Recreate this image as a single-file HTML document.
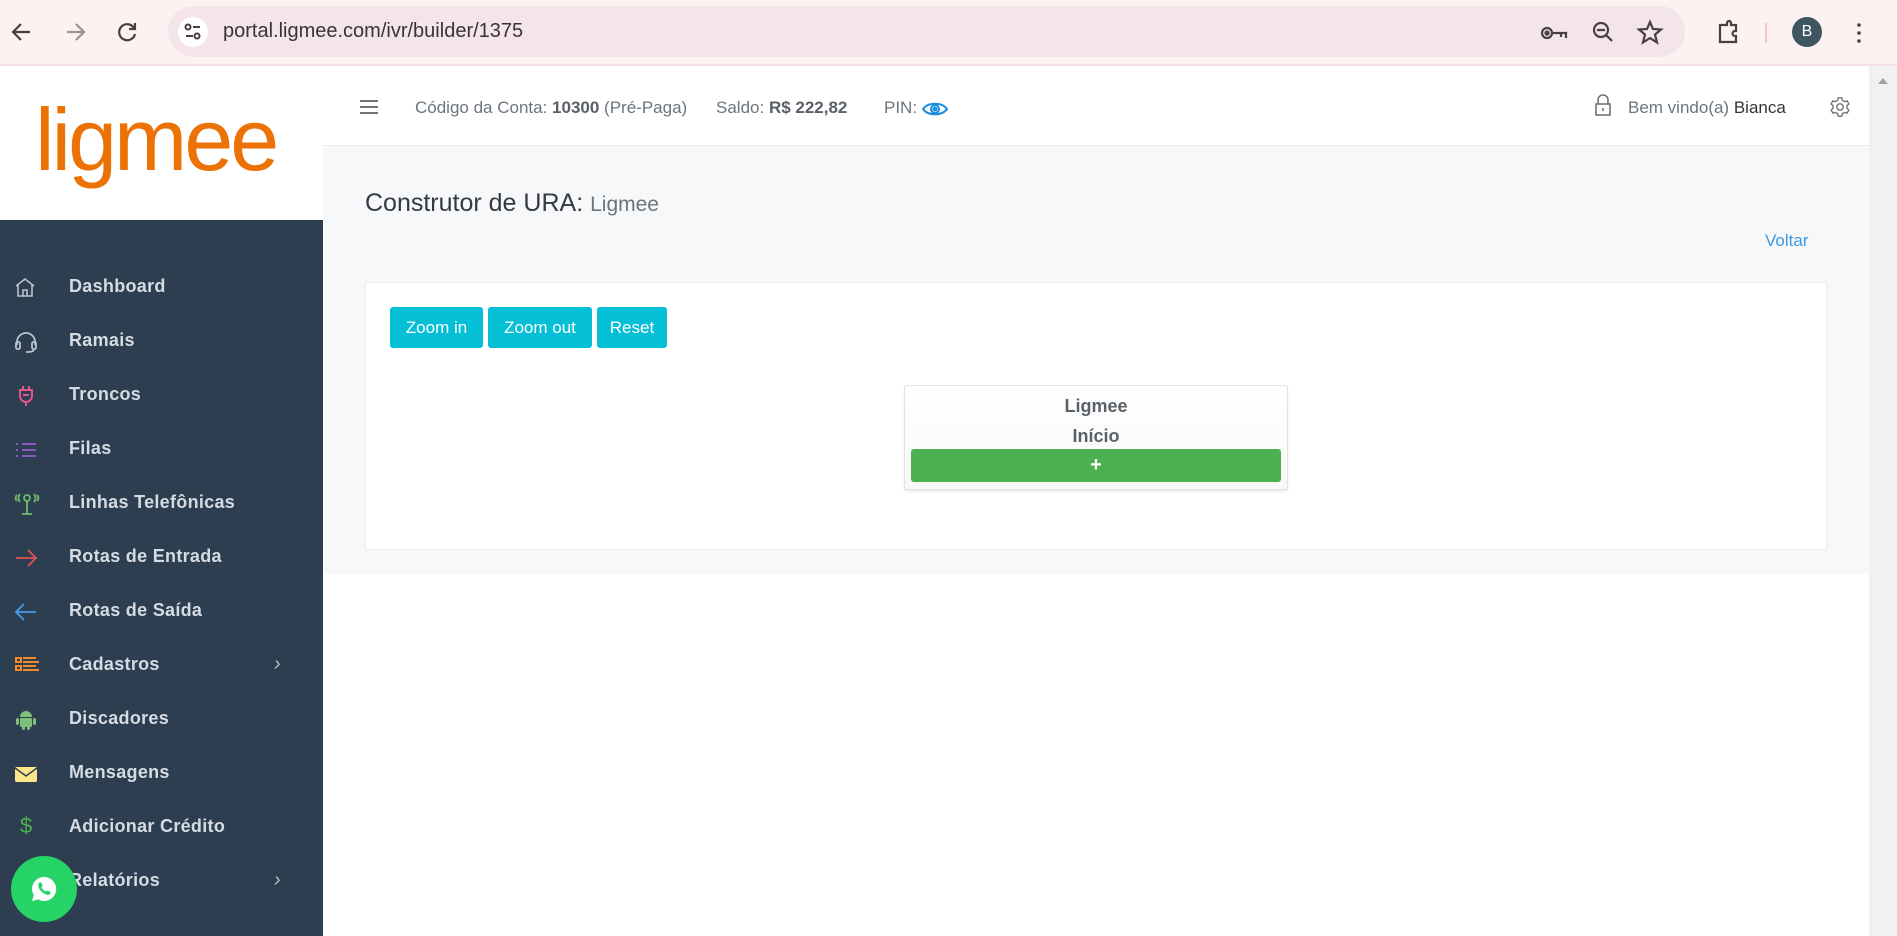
<!DOCTYPE html>
<html><head><meta charset="utf-8"><style>
*{box-sizing:border-box;margin:0;padding:0}
body{width:1897px;height:936px;overflow:hidden;font-family:"Liberation Sans",sans-serif;background:#fff;position:relative}
.a{position:absolute}
#chrome{left:0;top:0;width:1897px;height:66px;background:#fdf2f2;border-bottom:2px solid #f4dfe2}
#pill{left:168px;top:6px;width:1517px;height:51px;border-radius:26px;background:#f3e5e9}
#side{left:0;top:66px;width:323px;height:870px;background:#2d3e50}
#logo{left:0;top:66px;width:323px;height:154px;background:#fff}
#hdr{left:323px;top:66px;width:1546px;height:80px;background:#fff;border-bottom:1px solid #e8eaed}
#content{left:323px;top:146px;width:1546px;height:428px;background:#f7f8fa}
#scroll{left:1869px;top:66px;width:28px;height:870px;background:#f1f1f1}
.hd{font-size:17px;color:#6c757d;top:97px}
.hd b{color:#5a6066}
.item{left:0;width:323px;height:54px;color:#d5dbe2;font-size:18px;font-weight:bold;letter-spacing:.3px}
.item span{position:absolute;left:69px;top:15px}
.item svg{position:absolute;left:14px;top:15px}
.chev{position:absolute;left:274px;top:14px;color:#c0c6cc;font-weight:normal;font-size:20px}
.btn{top:307px;height:41px;background:#05bfd7;color:#fff;font-size:17px;border-radius:3px;text-align:center;line-height:41px}
</style></head><body>
<div id="chrome" class="a"></div>
<div id="pill" class="a"></div>
<svg class="a" style="left:8px;top:19px" width="140" height="26" viewBox="0 0 140 26" fill="none" stroke="#4a3f42" stroke-width="2.2">
<path d="M22 13H6M13 5l-8 8 8 8"/>
<path d="M59 13h16M68 5l8 8-8 8" stroke="#9a9193"/>
<path d="M126 9a8 8 0 1 0 1 6M127 4v6h-6"/>
</svg>
<div class="a" style="left:178px;top:17px;width:30px;height:30px;border-radius:15px;background:#fff"></div>
<svg class="a" style="left:184px;top:22px" width="18" height="20" viewBox="0 0 18 20" fill="none" stroke="#4a3f42" stroke-width="2"><circle cx="4" cy="5" r="2.5"/><path d="M9 5h7M2 14h7"/><circle cx="13" cy="14" r="2.5"/></svg>
<div class="a" style="left:223px;top:20px;font-size:20px;color:#3c3336">portal.ligmee.com/ivr/builder/1375</div>
<svg class="a" style="left:1538px;top:18px" width="340" height="30" viewBox="0 0 340 30" fill="none" stroke="#4a3f42" stroke-width="2.2">
<circle cx="9" cy="15" r="5"/><circle cx="9" cy="15" r="1.5" fill="#4a3f42"/><path d="M14 15h14v5M23 15v4"/>
<circle cx="63" cy="12" r="7"/><path d="M59 12h8M68 17l6 6"/>
<path d="M112 4l3 7 8 .5-6 5 2 8-7-4.5-7 4.5 2-8-6-5 8-.5z"/>
<path d="M182 7h7v-2a2 2 0 0 1 4 0v2h5v6h-1a2.5 2.5 0 0 0 0 5h1v6h-16z"/>
<path d="M228 5v20" stroke="#f4c9d0"/>
<circle cx="321" cy="7" r="1.8" fill="#4a3f42" stroke="none"/><circle cx="321" cy="15" r="1.8" fill="#4a3f42" stroke="none"/><circle cx="321" cy="23" r="1.8" fill="#4a3f42" stroke="none"/>
</svg>
<div class="a" style="left:1792px;top:17px;width:30px;height:30px;border-radius:15px;background:#3f5661;color:#fff;font-size:16px;text-align:center;line-height:30px">B</div>

<div id="side" class="a"></div>
<div id="logo" class="a"><div class="a" style="left:35px;top:30px;font-size:88px;color:#ec7205;font-family:'Liberation Sans',sans-serif;letter-spacing:-3px;line-height:1">ligmee</div></div>
<div id="hdr" class="a"></div>
<div id="content" class="a"></div>
<div id="scroll" class="a"><div class="a" style="left:9px;top:12px;border:5px solid transparent;border-bottom:6px solid #a0a0a0;border-top:0"></div></div>

<svg class="a" style="left:359px;top:99px" width="20" height="16"><path d="M1 2h18M1 8h18M1 14h18" stroke="#6c757d" stroke-width="2"/></svg>
<div class="a hd" style="left:415px;top:98px">Código da Conta: <b>10300</b> (Pré-Paga)</div>
<div class="a hd" style="left:716px;top:98px">Saldo: <b>R$ 222,82</b></div>
<div class="a hd" style="left:884px;top:98px">PIN:</div>
<svg class="a" style="left:921px;top:99px" width="28" height="20" viewBox="0 0 28 20" fill="none" stroke="#1d8fe1" stroke-width="2"><path d="M2 10C7 3 21 3 26 10C21 17 7 17 2 10z"/><circle cx="14" cy="10" r="4"/><circle cx="14" cy="10" r="1.5" fill="#1d8fe1"/></svg>
<svg class="a" style="left:1594px;top:94px" width="18" height="22" viewBox="0 0 18 22" fill="none" stroke="#6c757d" stroke-width="1.6"><path d="M4 10V6a5 5 0 0 1 10 0v4"/><rect x="2" y="10" width="14" height="11"/><path d="M9 14v3"/></svg>
<div class="a hd" style="left:1628px;top:98px">Bem vindo(a) <span style="color:#333">Bianca</span></div>
<svg class="a" style="left:1829px;top:96px" width="22" height="22" viewBox="0 0 24 24" fill="none" stroke="#6c757d" stroke-width="1.5"><circle cx="12" cy="12" r="3.5"/><path d="M10 2h4l.6 2.8 2.4 1.4 2.7-.9 2 3.4-2.1 1.9v2.8l2.1 1.9-2 3.4-2.7-.9-2.4 1.4L14 22h-4l-.6-2.8-2.4-1.4-2.7.9-2-3.4 2.1-1.9v-2.8L2.3 8.7l2-3.4 2.7.9 2.4-1.4z"/></svg>

<div class="a" style="left:365px;top:189px;font-size:25px;color:#343a40">Construtor de URA: <span style="color:#6c757d;font-size:21px">Ligmee</span></div>
<div class="a" style="left:1765px;top:231px;font-size:17px;color:#3c9be6">Voltar</div>

<div class="a" style="left:365px;top:282px;width:1462px;height:268px;background:#fff;border:1px solid #e9ecef"></div>
<div class="a btn" style="left:390px;width:93px">Zoom in</div>
<div class="a btn" style="left:488px;width:104px">Zoom out</div>
<div class="a btn" style="left:597px;width:70px">Reset</div>
<div class="a" style="left:904px;top:385px;width:384px;height:105px;border:1px solid #e2e2e2;border-radius:3px;background:linear-gradient(#fff,#f8f8f8);box-shadow:0 2px 2px rgba(0,0,0,.08)"></div>
<div class="a" style="left:904px;top:396px;width:384px;text-align:center;font-size:18px;font-weight:bold;color:#5a6168">Ligmee</div>
<div class="a" style="left:904px;top:426px;width:384px;text-align:center;font-size:18px;font-weight:bold;color:#5a6168">Início</div>
<div class="a" style="left:911px;top:449px;width:370px;height:33px;background:#4caf50;border-radius:3px;color:#fff;text-align:center;font-weight:bold;font-size:20px;line-height:32px">+</div>

<div class="a item" style="top:261px"><svg width="22" height="24" viewBox="0 0 22 24" fill="none" stroke="#b8c2cc" stroke-width="1.6"><path d="M2 10L11 3l9 7M4 9v11h14V9M9 20v-6h4v6"/></svg><span>Dashboard</span></div>
<div class="a item" style="top:315px"><svg width="24" height="24" viewBox="0 0 24 24" fill="none" stroke="#b8c2cc" stroke-width="1.8"><path d="M3 15v-3a9 9 0 0 1 18 0v3"/><rect x="2" y="12" width="4" height="7" rx="1.5"/><rect x="18" y="12" width="4" height="7" rx="1.5"/><path d="M20 19c0 3-4 3-8 3"/></svg><span>Ramais</span></div>
<div class="a item" style="top:369px"><svg width="24" height="24" viewBox="0 0 24 24" fill="none" stroke="#e1568b" stroke-width="2"><path d="M9 2v4M15 2v4M6 6h12v6a6 6 0 0 1-12 0zM12 18v4M9 11h6"/></svg><span>Troncos</span></div>
<div class="a item" style="top:423px"><svg width="24" height="24" viewBox="0 0 24 24" fill="none" stroke="#9b59d0" stroke-width="1.8"><path d="M8 6h14M8 12h14M8 18h14M3 5v2M3 11v2M3 17v2"/></svg><span>Filas</span></div>
<div class="a item" style="top:477px"><svg width="26" height="24" viewBox="0 0 26 24" fill="none" stroke="#6dbb6d" stroke-width="1.8"><circle cx="13" cy="6" r="3"/><path d="M13 9v13M8 22h10M6 2a6 6 0 0 0 0 8M20 2a6 6 0 0 1 0 8M3 3a4 4 0 0 0 0 6M23 3a4 4 0 0 1 0 6"/></svg><span>Linhas Telefônicas</span></div>
<div class="a item" style="top:531px"><svg width="24" height="24" viewBox="0 0 24 24" fill="none" stroke="#e05656" stroke-width="1.8"><path d="M2 12h20M14 4l8 8-8 8"/></svg><span>Rotas de Entrada</span></div>
<div class="a item" style="top:585px"><svg width="24" height="24" viewBox="0 0 24 24" fill="none" stroke="#4a9be6" stroke-width="1.8"><path d="M22 12H2M10 4l-8 8 8 8"/></svg><span>Rotas de Saída</span></div>
<div class="a item" style="top:639px"><svg width="26" height="24" viewBox="0 0 26 24" fill="none" stroke="#f08a24" stroke-width="2"><rect x="2" y="4" width="5" height="4"/><rect x="2" y="12" width="5" height="4"/><path d="M9 4h13M9 8h16M9 12h13M9 16h16"/></svg><span>Cadastros</span><i class="chev">›</i></div>
<div class="a item" style="top:693px"><svg width="24" height="24" viewBox="0 0 24 24" fill="#7cc07c"><path d="M6 9a6 6 0 0 1 12 0z"/><rect x="6" y="10" width="12" height="9" rx="1"/><rect x="2" y="10" width="3" height="7" rx="1.5"/><rect x="19" y="10" width="3" height="7" rx="1.5"/><rect x="8" y="18" width="3" height="4" rx="1.5"/><rect x="13" y="18" width="3" height="4" rx="1.5"/></svg><span>Discadores</span></div>
<div class="a item" style="top:747px"><svg width="24" height="24" viewBox="0 0 24 24"><rect x="1" y="5" width="22" height="15" rx="1.5" fill="#fde58a"/><path d="M1 6l11 8 11-8" fill="none" stroke="#2d3e50" stroke-width="1.5"/></svg><span>Mensagens</span></div>
<div class="a item" style="top:801px"><span style="left:20px;color:#4caf50;font-weight:normal;font-size:22px;top:12px">$</span><span>Adicionar Crédito</span></div>
<div class="a item" style="top:855px"><span>Relatórios</span><i class="chev">›</i></div>
<div class="a" style="left:11px;top:856px;width:66px;height:66px;border-radius:33px;background:#25d366"></div>
<svg class="a" style="left:30px;top:875px" width="28" height="28" viewBox="0 0 28 28"><path d="M14 2a12 12 0 0 0-10.3 18L2 26l6.2-1.6A12 12 0 1 0 14 2z" fill="#fff"/><path d="M9 8c1-1 2-1 2.5 0l1 2.5c.2.6-.6 1.3-1 1.8 1 2 2.5 3.4 4.4 4.3.5-.4 1.1-1.2 1.7-1l2.5 1.1c.8.4.6 1.6-.2 2.4-1.3 1.2-3.5 1-6.3-.8-2.5-1.7-4.3-4-5-6.2-.4-1.6 0-3.2.4-4.1z" fill="#25d366"/></svg>
</body></html>
